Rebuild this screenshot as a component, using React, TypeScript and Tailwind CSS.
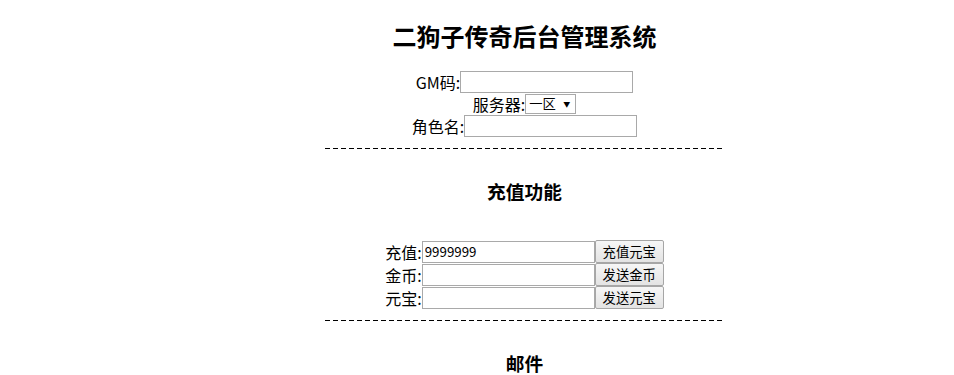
import React from "react";

const Dashes: React.FC = () => (
  <div className="flex h-[22px] items-center justify-center">
    <svg width="400" height="1" className="block" shapeRendering="crispEdges">
      <line x1="0" y1="0.5" x2="400" y2="0.5" stroke="#000" strokeWidth="1" strokeDasharray="5 3" />
    </svg>
  </div>
);

const TextField: React.FC<{ value?: string }> = ({ value }) => (
  <input
    type="text"
    defaultValue={value}
    className="h-[22px] w-[173px] border border-[#a9a9a9] bg-white px-[2px] text-[13.33px] text-black outline-none"
  />
);

const Btn: React.FC<{ label: string }> = ({ label }) => (
  <button className="h-[23px] w-[69px] rounded-[2px] border border-[#a6a6a6] bg-gradient-to-b from-[#f6f6f6] to-[#e3e3e3] text-[13.33px] leading-[21px] text-black">
    {label}
  </button>
);

const App: React.FC = () => {
  return (
    <div className="min-h-screen bg-white pl-[95px] text-center font-['Microsoft_YaHei','Noto_Sans_CJK_SC',sans-serif] text-[16px] text-black">
      <h2 className="pt-[20px] pb-[19px] text-[24px] font-bold leading-[32px]">二狗子传奇后台管理系统</h2>

      <div className="flex flex-col">
        <div className="flex h-[22px] items-center justify-center">
          <span className="leading-[22px]">GM码:</span>
          <TextField />
        </div>
        <div className="flex h-[22px] items-center justify-center">
          <span className="leading-[22px]">服务器:</span>
          <div className="flex h-[20px] w-[51px] items-center justify-between border border-[#a9a9a9] bg-white pl-[3px] pr-[5px] text-[13.33px] leading-[18px]">
            <span>一区</span>
            <span className="text-[7px] leading-[7px]">▼</span>
          </div>
        </div>
        <div className="flex h-[22px] items-center justify-center">
          <span className="leading-[22px]">角色名:</span>
          <TextField />
        </div>
      </div>

      <Dashes />

      <h3 className="py-[19px] text-[18.72px] font-bold leading-[25px]">充值功能</h3>
      <div className="h-[18px]" />

      <div className="flex flex-col">
        <div className="flex h-[23px] items-center justify-center">
          <span className="leading-[22px]">充值:</span>
          <TextField value="9999999" />
          <Btn label="充值元宝" />
        </div>
        <div className="flex h-[23px] items-center justify-center">
          <span className="leading-[22px]">金币:</span>
          <TextField />
          <Btn label="发送金币" />
        </div>
        <div className="flex h-[23px] items-center justify-center">
          <span className="leading-[22px]">元宝:</span>
          <TextField />
          <Btn label="发送元宝" />
        </div>
      </div>

      <Dashes />

      <h3 className="py-[19px] text-[18.72px] font-bold leading-[25px]">邮件</h3>
    </div>
  );
};

export default App;
